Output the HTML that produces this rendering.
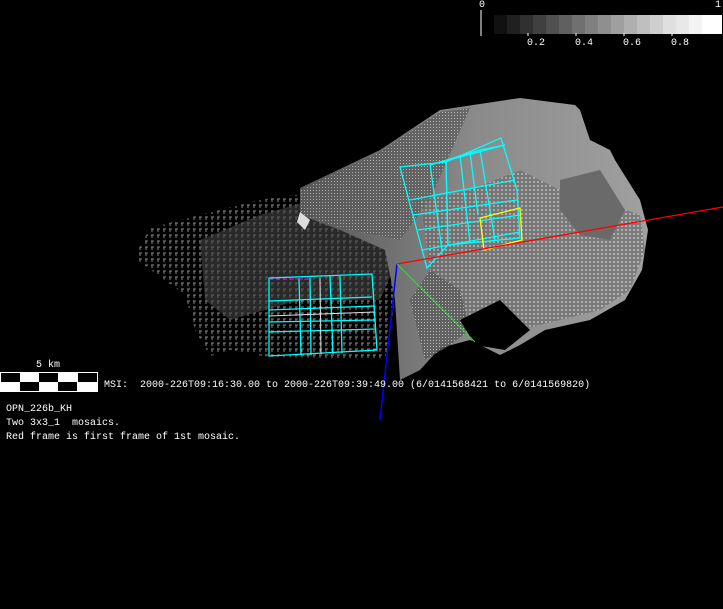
<!DOCTYPE html>
<html><head><style>
body{margin:0;background:#000;width:723px;height:609px;overflow:hidden;position:relative;font-family:"Liberation Mono","DejaVu Sans Mono",monospace;color:#fff}
.t{position:absolute;font-size:10px;white-space:pre;line-height:12px}
</style></head><body>
<svg width="723" height="609" style="position:absolute;left:0;top:0">
<defs>
<pattern id="dots" width="6" height="6" patternUnits="userSpaceOnUse"><rect width="6" height="6" fill="#000"/><path d="M1 1h3M2 1v3" stroke="#888" stroke-width="1"/></pattern>
<pattern id="dots2" width="4" height="4" patternUnits="userSpaceOnUse"><rect width="4" height="4" fill="#666"/><rect x="1" y="1" width="2" height="2" fill="#bbb"/></pattern>
<pattern id="dots3" width="3" height="3" patternUnits="userSpaceOnUse"><rect width="3" height="3" fill="#5a5a5a"/><rect x="1" y="1" width="1" height="1" fill="#ccc"/></pattern>
<linearGradient id="g1" x1="0" y1="0" x2="1" y2="0"><stop offset="0" stop-color="#555"/><stop offset="0.5" stop-color="#8a8a8a"/><stop offset="1" stop-color="#a0a0a0"/></linearGradient>
</defs>
<polygon points="135,255 150,228 200,215 260,200 330,190 390,175 400,270 385,360 330,358 270,357 230,350 210,356 195,330 185,295 140,262" fill="url(#dots)"/>
<polygon points="200,240 260,215 330,195 390,180 395,265 380,300 300,300 230,320 205,300" fill="#444" opacity="0.6"/>
<polygon points="300,188 380,150 440,110 520,98 575,105 600,130 615,160 640,200 648,230 642,270 625,300 590,320 545,330 520,345 500,355 470,340 440,348 420,370 400,380 395,300 385,250 340,230 300,215" fill="url(#g1)"/>
<polygon points="300,190 380,152 440,112 470,108 430,200 400,240 340,228 300,214" fill="url(#dots3)" opacity="0.7"/>
<polygon points="420,200 470,190 520,170 560,190 600,200 640,215 645,250 630,290 600,310 560,320 520,330 470,330 440,320 430,270" fill="url(#dots2)" opacity="0.6"/>
<polygon points="430,270 460,290 470,330 450,345 425,360 410,300" fill="url(#dots3)" opacity="0.8"/>
<polygon points="560,180 600,170 625,210 610,240 580,235 560,210" fill="#6a6a6a"/>
<polygon points="580,110 600,120 610,150 590,140" fill="#000"/>
<polygon points="460,320 500,300 530,330 505,350 475,345" fill="#000"/>
<polygon points="300,212 310,220 305,230 297,222" fill="#ddd"/>
<g stroke="#0ff" stroke-width="1.3" fill="none">
<polygon points="400,167 446,162 448,245 427,268"/>
<polygon points="446,162 501,138 517,190 520,238 448,245"/>
<polygon points="430,165 480,150 505,145"/>
<line x1="410" y1="200" x2="515" y2="180"/><line x1="413" y1="215" x2="517" y2="200"/>
<line x1="418" y1="230" x2="520" y2="215"/><line x1="422" y1="250" x2="520" y2="232"/>
<line x1="430" y1="164" x2="442" y2="250"/><line x1="460" y1="155" x2="470" y2="243"/>
<line x1="480" y1="150" x2="495" y2="240"/><line x1="470" y1="152" x2="478" y2="215"/>
</g>
<polygon points="480,218 520,208 522,240 484,250" stroke="#ff0" stroke-width="1.3" fill="none"/>
<g stroke="#0ff" stroke-width="1.3" fill="none">
<polygon points="269,278 372,274 377,350 269,356"/>
<line x1="269" y1="301" x2="372" y2="297"/><line x1="269" y1="310" x2="374" y2="306"/>
<line x1="269" y1="322" x2="375" y2="320"/><line x1="269" y1="332" x2="376" y2="329"/>
<line x1="299" y1="278" x2="301" y2="355"/><line x1="310" y1="278" x2="311" y2="355"/>
<line x1="330" y1="276" x2="333" y2="354"/><line x1="340" y1="276" x2="342" y2="353"/>
</g>
<g stroke="#ddd" stroke-width="1" fill="none"><line x1="269" y1="316" x2="374" y2="312"/><line x1="320" y1="278" x2="321" y2="354"/></g>
<line x1="269" y1="279" x2="310" y2="279" stroke="#f0f" stroke-dasharray="4,3"/>
<line x1="397" y1="264" x2="723" y2="207" stroke="#f00" stroke-width="1.3"/>
<line x1="397" y1="264" x2="380" y2="420" stroke="#00f" stroke-width="1.5"/>
<line x1="397" y1="264" x2="475" y2="342" stroke="#0f0" stroke-width="1"/>
<g>
<rect x="494" y="15" width="14" height="19" fill="#111"/><rect x="507" y="15" width="14" height="19" fill="#202020"/>
<rect x="520" y="15" width="14" height="19" fill="#303030"/><rect x="533" y="15" width="14" height="19" fill="#404040"/>
<rect x="546" y="15" width="14" height="19" fill="#505050"/><rect x="559" y="15" width="14" height="19" fill="#606060"/>
<rect x="572" y="15" width="14" height="19" fill="#707070"/><rect x="585" y="15" width="14" height="19" fill="#808080"/>
<rect x="598" y="15" width="14" height="19" fill="#8f8f8f"/><rect x="611" y="15" width="14" height="19" fill="#9f9f9f"/>
<rect x="624" y="15" width="14" height="19" fill="#afafaf"/><rect x="637" y="15" width="14" height="19" fill="#bfbfbf"/>
<rect x="650" y="15" width="14" height="19" fill="#cfcfcf"/><rect x="663" y="15" width="14" height="19" fill="#dfdfdf"/>
<rect x="676" y="15" width="14" height="19" fill="#e8e8e8"/><rect x="689" y="15" width="14" height="19" fill="#f4f4f4"/>
<rect x="702" y="15" width="20" height="19" fill="#fff"/>
<line x1="481" y1="10" x2="481" y2="36" stroke="#fff"/>
<line x1="528" y1="33" x2="528" y2="36" stroke="#fff"/><line x1="576" y1="33" x2="576" y2="36" stroke="#fff"/>
<line x1="624" y1="33" x2="624" y2="36" stroke="#fff"/><line x1="672" y1="33" x2="672" y2="36" stroke="#fff"/>
</g>
<rect x="0" y="372" width="98" height="20" fill="#fff"/>
<g fill="#000"><rect x="1" y="373" width="19" height="9"/><rect x="39" y="373" width="19" height="9"/><rect x="78" y="373" width="19" height="9"/>
<rect x="20" y="382" width="19" height="9"/><rect x="58" y="382" width="19" height="9"/></g>
</svg>
<div class="t" style="left:479px;top:0px">0</div>
<div class="t" style="left:715px;top:0px">1</div>
<div class="t" style="left:527px;top:38px">0.2</div>
<div class="t" style="left:575px;top:38px">0.4</div>
<div class="t" style="left:623px;top:38px">0.6</div>
<div class="t" style="left:671px;top:38px">0.8</div>
<div class="t" style="left:36px;top:360px">5 km</div>
<div class="t" style="left:104px;top:380px">MSI:  2000-226T09:16:30.00 to 2000-226T09:39:49.00 (6/0141568421 to 6/0141569820)</div>
<div class="t" style="left:6px;top:404px">OPN_226b_KH</div>
<div class="t" style="left:6px;top:418px">Two 3x3_1  mosaics.</div>
<div class="t" style="left:6px;top:432px">Red frame is first frame of 1st mosaic.</div>
</body></html>
